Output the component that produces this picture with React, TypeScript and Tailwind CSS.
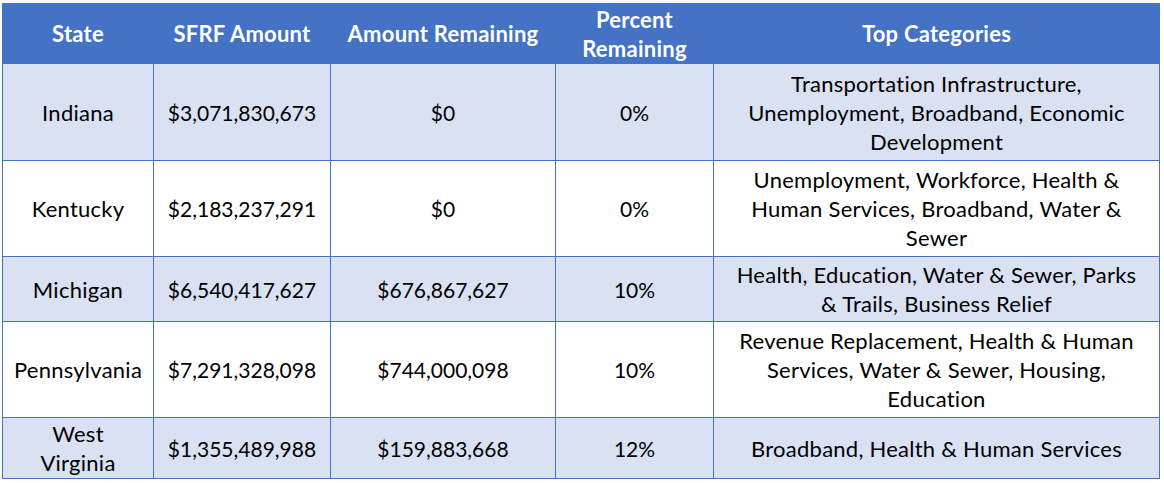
const rows = [
  {
    state: ["Indiana"],
    amount: "$3,071,830,673",
    remaining: "$0",
    percent: "0%",
    cats: ["Transportation Infrastructure,", "Unemployment, Broadband, Economic", "Development"],
    h: "h-[97px]",
    shaded: true,
  },
  {
    state: ["Kentucky"],
    amount: "$2,183,237,291",
    remaining: "$0",
    percent: "0%",
    cats: ["Unemployment, Workforce, Health &", "Human Services, Broadband, Water &", "Sewer"],
    h: "h-[96px]",
    shaded: false,
  },
  {
    state: ["Michigan"],
    amount: "$6,540,417,627",
    remaining: "$676,867,627",
    percent: "10%",
    cats: ["Health, Education, Water & Sewer, Parks", "& Trails, Business Relief"],
    h: "h-[65px]",
    shaded: true,
  },
  {
    state: ["Pennsylvania"],
    amount: "$7,291,328,098",
    remaining: "$744,000,098",
    percent: "10%",
    cats: ["Revenue Replacement, Health & Human", "Services, Water & Sewer, Housing,", "Education"],
    h: "h-[96px]",
    shaded: false,
  },
  {
    state: ["West", "Virginia"],
    amount: "$1,355,489,988",
    remaining: "$159,883,668",
    percent: "12%",
    cats: ["Broadband, Health & Human Services"],
    h: "h-[61px]",
    shaded: true,
  },
];

function Lines({ lines }: { lines: string[] }) {
  return (
    <>
      {lines.map((l) => (
        <div key={l} className="whitespace-nowrap">
          {l}
        </div>
      ))}
    </>
  );
}

// words get a slightly larger size than digits so widths track the original Calibri
const cell = "border border-[#4472C4] align-middle";
const words = "text-[22px] tracking-[0.25px]";

export default function App() {
  return (
    <div className="min-h-screen bg-white pt-[3px] pl-[2px]" style={{ fontFamily: "Lato, 'Open Sans', sans-serif" }}>
      <table className="table-fixed border-collapse border border-[#4472C4] text-[21px] leading-[29px] text-black text-center">
        <colgroup>
          <col className="w-[151px]" />
          <col className="w-[177px]" />
          <col className="w-[225px]" />
          <col className="w-[158px]" />
          <col className="w-[446px]" />
        </colgroup>
        <thead>
          <tr className={`h-[60px] bg-[#4472C4] text-white font-bold ${words}`}>
            <th className={cell}>State</th>
            <th className={cell}>SFRF Amount</th>
            <th className={cell}>Amount Remaining</th>
            <th className={cell}>
              Percent
              <br />
              Remaining
            </th>
            <th className={cell}>Top Categories</th>
          </tr>
        </thead>
        <tbody>
          {rows.map((r) => (
            <tr key={r.amount} className={`${r.h} ${r.shaded ? "bg-[#D9E1F2]" : "bg-white"}`}>
              <td className={`${cell} ${words}`}>
                <Lines lines={r.state} />
              </td>
              <td className={cell}>{r.amount}</td>
              <td className={cell}>{r.remaining}</td>
              <td className={cell}>{r.percent}</td>
              <td className={`${cell} ${words}`}>
                <Lines lines={r.cats} />
              </td>
            </tr>
          ))}
        </tbody>
      </table>
    </div>
  );
}
